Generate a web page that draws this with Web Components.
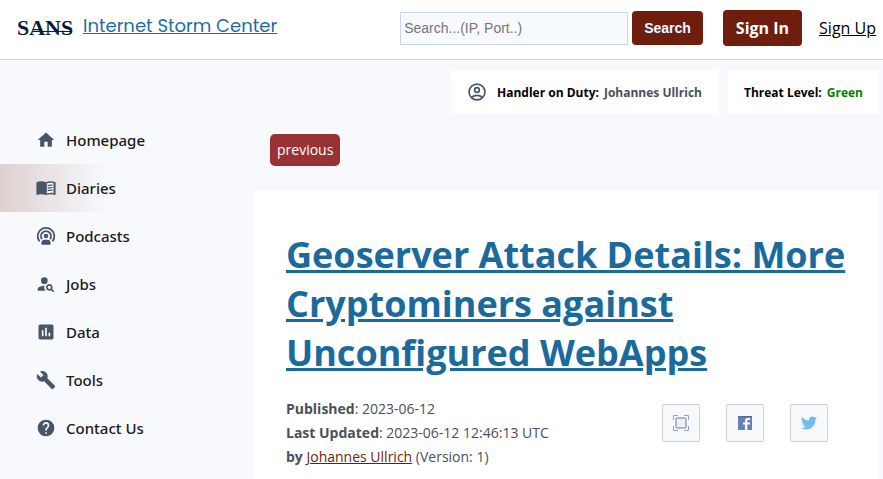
<!DOCTYPE html>
<html lang="en">
<head>
<meta charset="utf-8">
<title>Internet Storm Center</title>
<style>
  body {
    margin: 0;
    background: #f8f9fd;
    color: #000;
    font-family: "Open Sans", sans-serif;
    font-size: 14px;
  }
</style>
</head>
<body>
<isc-page>
  <isc-header slot="header"></isc-header>
  <isc-nav slot="nav">
    <isc-nav-item icon="home">Homepage</isc-nav-item>
    <isc-nav-item icon="book" active>Diaries</isc-nav-item>
    <isc-nav-item icon="podcast">Podcasts</isc-nav-item>
    <isc-nav-item icon="jobs">Jobs</isc-nav-item>
    <isc-nav-item icon="chart">Data</isc-nav-item>
    <isc-nav-item icon="wrench">Tools</isc-nav-item>
    <isc-nav-item icon="help">Contact Us</isc-nav-item>
  </isc-nav>
  <isc-status slot="status" icon="account" label="Handler on Duty:">Johannes Ullrich</isc-status>
  <isc-status slot="status" label="Threat Level:" level="green">Green</isc-status>
  <isc-diary published="2023-06-12" updated="2023-06-12 12:46:13 UTC" author="Johannes Ullrich" version="1">Geoserver Attack Details: More Cryptominers against Unconfigured WebApps</isc-diary>
</isc-page>

<script>
const ICONS = {
  home: `<path d="M10 20v-6h4v6h5v-8h3L12 3 2 12h3v8z"/>`,
  book: `<path d="M12 5C9 3.600 4 3.700 .5 5v15.500c3.500-1.500 8.500-1.500 11.500 0 3-1.500 8-1.500 11.500 0V5c-3.500-1.300-8.500-1.400-11.500 0z"/><path d="M13 6.500c2.500-1 5.500-1 8-.3v12c-2.500-.6-5.500-.5-8 .5z" fill="#f8f5f7"/><path d="M14 9.200c2-.8 4-.9 6-.5M14 12.200c2-.8 4-.9 6-.5M14 15.200c2-.8 4-.9 6-.5" fill="none" stroke="currentColor" stroke-width="1.500"/>`,
  podcast: `<g fill="none" stroke="currentColor" stroke-width="2.200"><path d="M4.200 18.500A10 10 0 1 1 19.800 18.500"/><path d="M7.200 15.800A6 6 0 1 1 16.800 15.800"/></g><circle cx="12" cy="12" r="2.800"/><path d="M6.500 22.500v-2.500c0-2 1.500-3.500 3.500-3.500h4c2 0 3.500 1.500 3.500 3.500v2.500z"/>`,
  jobs: `<circle cx="10" cy="8" r="4"/><path d="M10.350 14.010C7.620 13.910 2 15.270 2 18v2h9.540c-2.470-2.760-1.230-5.890-1.190-5.990zM19.430 18.020A4 4 0 1 0 18.020 19.430L20.590 22 22 20.590zM16 18a2 2 0 1 1 0-4 2 2 0 0 1 0 4z"/>`,
  chart: `<path d="M19 3H5a2 2 0 0 0-2 2v14a2 2 0 0 0 2 2h14a2 2 0 0 0 2-2V5a2 2 0 0 0-2-2zM9 17H7v-7h2zm4 0h-2V7h2zm4 0h-2v-4h2z"/>`,
  wrench: `<path d="M22.700 19l-9.100-9.100c.9-2.300.4-5-1.500-6.900-2-2-5-2.400-7.400-1.300L9 6 6 9 1.600 4.700C.4 7.100.9 10.100 2.900 12.100c1.900 1.900 4.600 2.400 6.900 1.500l9.100 9.100c.4.4 1 .4 1.400 0l2.300-2.300c.5-.4.5-1.100.1-1.400z"/>`,
  help: `<path d="M12 2a10 10 0 1 0 0 20 10 10 0 0 0 0-20zm1 17h-2v-2h2zm2.070-7.750l-.9.920C13.450 12.900 13 13.500 13 15h-2v-.5c0-1.100.45-2.100 1.170-2.830l1.240-1.260A2 2 0 1 0 10 9H8a4 4 0 1 1 7.070 2.250z"/>`,
  account: `<g fill="none" stroke="currentColor" stroke-width="2"><circle cx="12" cy="12" r="9.500"/><circle cx="12" cy="9.500" r="2.800"/><path d="M5.500 18.500c3.500-3.300 9.500-3.300 13 0"/></g>`
};

const icon = (name) => `<svg viewBox="0 0 24 24" width="20" height="20" fill="currentColor" aria-hidden="true">${ICONS[name]}</svg>`;

class IscPage extends HTMLElement {
  constructor() {
    super();
    this.attachShadow({ mode: "open" });
  }

  static get styles() {
    return /* css */`
      :host {
        display: block;
      }

      .layout {
        display: grid;
        grid-template-columns: 254px 1fr;
        padding: 10px 4px 0 0;
      }

      aside {
        padding-top: 46px;
      }

      .status {
        display: flex;
        justify-content: flex-end;
        gap: 10px;
      }

      .pager {
        display: flex;
        padding: 20px 16px 24px;
      }

      .pager a {
        background: #993333;
        color: #fff;
        border-radius: 5px;
        line-height: 20px;
        padding: 6px 7px;
        text-decoration: none;
      }
    `;
  }

  connectedCallback() {
    this.shadowRoot.innerHTML = /* html */`
    <style>${IscPage.styles}</style>
    <slot name="header"></slot>
    <div class="layout">
      <aside><slot name="nav"></slot></aside>
      <main>
        <div class="status"><slot name="status"></slot></div>
        <div class="pager"><a href="#previous">previous</a></div>
        <slot></slot>
      </main>
    </div>
    `;
  }
}

class IscHeader extends HTMLElement {
  constructor() {
    super();
    this.attachShadow({ mode: "open" });
  }

  static get styles() {
    return /* css */`
      :host {
        display: flex;
        align-items: center;
        justify-content: space-between;
        min-height: 56px;
        padding: 0 7px 3px 18px;
        background: #fff;
        border-bottom: 1px solid #cdd3e6;
      }

      .brand, form, .account {
        display: flex;
        align-items: center;
      }

      .brand {
        gap: 10px;
        text-decoration: none;
        color: #1e6ca0;
        font-family: Poppins, Inter, sans-serif;
        font-size: 18px;
        line-height: 24px;
      }

      .name {
        padding-bottom: 4px;
        text-decoration: underline;
      }

      .tools {
        display: flex;
        align-items: center;
        gap: 20px;
      }

      form {
        gap: 4px;
      }

      input {
        box-sizing: border-box;
        width: 228px;
        height: 33px;
        padding: 0 3px;
        background: #f8f9fd;
        border: 1px solid #c8d6ea;
        font: 14px "Liberation Sans", Arial, sans-serif;
      }

      input::placeholder {
        color: #757575;
      }

      button {
        height: 34px;
        padding: 0 12px;
        border: 0;
        border-radius: 4px;
        background: #6f1d0c;
        color: #f8f9fd;
        font: bold 14px "Liberation Sans", Arial, sans-serif;
        text-shadow: 0 1px 1px #283966;
      }

      .account {
        gap: 17px;
        font-size: 16px;
        line-height: 24px;
      }

      .account a {
        color: #000;
      }

      .account .signin {
        padding: 6px 13px;
        background: #6f1d0c;
        border-radius: 4px;
        color: #fff;
        font-weight: bold;
        text-decoration: none;
      }
    `;
  }

  connectedCallback() {
    this.shadowRoot.innerHTML = /* html */`
    <style>${IscHeader.styles}</style>
    <a class="brand" href="#home">
      <svg width="55" height="28" viewBox="0 0 55 28" fill="#071a33" role="img">
        <text x="-1" y="21" font-family="Liberation Serif, serif" font-weight="bold" font-size="22">SANS</text>
        <path d="M15 17h38v1H15z"/>
      </svg>
      <span class="name">Internet Storm Center</span>
    </a>
    <div class="tools">
      <form>
        <input type="text" aria-label="Search" placeholder="Search...(IP, Port..)">
        <button type="button">Search</button>
      </form>
      <div class="account">
        <a class="signin" href="#login">Sign In</a>
        <a href="#register">Sign Up</a>
      </div>
    </div>
    `;
  }
}

class IscNav extends HTMLElement {
  constructor() {
    super();
    this.attachShadow({ mode: "open" });
  }

  connectedCallback() {
    this.shadowRoot.innerHTML = /* html */`
    <style>
      :host {
        display: block;
      }

      nav {
        display: flex;
        flex-direction: column;
      }
    </style>
    <nav><slot></slot></nav>
    `;
  }
}

class IscNavItem extends HTMLElement {
  constructor() {
    super();
    this.attachShadow({ mode: "open" });
  }

  static get styles() {
    return /* css */`
      :host {
        display: block;
      }

      :host([active]) {
        background: linear-gradient(90deg, #dfd0d0, #f8f9fd 108px);
      }

      a {
        display: flex;
        align-items: center;
        gap: 10px;
        height: 48px;
        padding-left: 36px;
        color: #1a1a1a;
        font-family: "Noto Sans", sans-serif;
        font-size: 15px;
        font-weight: 500;
        text-decoration: none;
      }

      svg {
        color: #475569;
      }
    `;
  }

  connectedCallback() {
    this.shadowRoot.innerHTML = /* html */`
    <style>${IscNavItem.styles}</style>
    <a href="#${this.getAttribute("icon")}">${icon(this.getAttribute("icon"))}<span><slot></slot></span></a>
    `;
  }
}

class IscStatus extends HTMLElement {
  constructor() {
    super();
    this.attachShadow({ mode: "open" });
  }

  static get styles() {
    return /* css */`
      :host {
        display: flex;
        align-items: center;
        min-height: 44px;
        padding: 0 16px;
        background: #fff;
        color: #4a5057;
        font-size: 12px;
        font-weight: bold;
      }

      :host([level="green"]) {
        color: #008000;
      }

      svg {
        color: #475569;
        margin-right: 10px;
      }

      .label {
        color: #000;
        margin-right: 5px;
      }
    `;
  }

  connectedCallback() {
    const name = this.getAttribute("icon");
    this.shadowRoot.innerHTML = /* html */`
    <style>${IscStatus.styles}</style>
    ${name ? icon(name) : ""}
    <span class="label">${this.getAttribute("label")}</span>
    <span><slot></slot></span>
    `;
  }
}

class IscDiary extends HTMLElement {
  constructor() {
    super();
    this.attachShadow({ mode: "open" });
  }

  static get styles() {
    return /* css */`
      :host {
        display: block;
        min-height: 225px;
        padding: 40px 32px 24px;
        background: #fff;
        color: #4a5057;
      }

      h1 {
        margin: 0;
        font-size: 36px;
        line-height: 49px;
      }

      h1 a {
        color: #1b6a9c;
      }

      .info {
        display: flex;
        justify-content: space-between;
        align-items: flex-start;
        padding: 20px 19px 0 0;
      }

      .meta {
        line-height: 24px;
      }

      .meta a {
        color: #6f1d0c;
      }

      .share {
        display: flex;
        gap: 26px;
        padding-top: 7px;
      }

      .share a {
        display: flex;
        align-items: center;
        justify-content: center;
        width: 36px;
        height: 36px;
        background: #f8f9fd;
        border: 1px solid #ced0d4;
        border-radius: 2px;
      }
    `;
  }

  connectedCallback() {
    this.shadowRoot.innerHTML = /* html */`
    <style>${IscDiary.styles}</style>
    <h1><a href="#diary"><slot></slot></a></h1>
    <div class="info">
      <div class="meta">
        <div><b>Published</b>: ${this.getAttribute("published")}</div>
        <div><b>Last Updated</b>: ${this.getAttribute("updated")}</div>
        <div><b>by</b> <a href="#handler">${this.getAttribute("author")}</a> (Version: ${this.getAttribute("version")})</div>
      </div>
      <div class="share">
        <a href="#full" aria-label="Full screen">
          <svg width="16" height="16" viewBox="0 0 16 16" fill="none" stroke="#8ba5d3">
            <path d="M.5 5V.5H5M11 .5h4.500V5M15.500 11v4.500H11M5 15.500H.5V11"/>
            <rect x="3" y="3" width="10" height="10" rx="1.500" fill="#edeff2" stroke="#90a4cd" stroke-width="1.500"/>
          </svg>
        </a>
        <a href="#facebook" aria-label="Facebook">
          <svg width="14" height="14" viewBox="0 0 14 14">
            <path fill="#6a80b5" d="M0 0h14v14H0z"/>
            <path fill="#52689f" d="M0 0h14v1H0z"/>
            <path fill="#fff" d="M7 14V8.500H5v-2h2V5c0-2 1-3 3-3h2v2h-1.500C9.700 4 9.300 4.300 9.300 5v1.500H12l-.3 2H9.300V14z"/>
          </svg>
        </a>
        <a href="#twitter" aria-label="Twitter">
          <svg width="16" height="16" viewBox="0 0 24 24" fill="#74bcf0">
            <path d="M23.950 4.600a10 10 0 0 1-2.800.8 4.900 4.900 0 0 0 2.150-2.700 9.900 9.900 0 0 1-3.120 1.200 4.920 4.920 0 0 0-8.380 4.480A13.950 13.950 0 0 1 1.670 3.150a4.900 4.900 0 0 0 1.520 6.560 4.900 4.900 0 0 1-2.230-.61v.06a4.930 4.930 0 0 0 3.950 4.830 5 5 0 0 1-2.210.08 4.940 4.940 0 0 0 4.600 3.420A9.870 9.870 0 0 1 0 19.540a14 14 0 0 0 7.550 2.210c9.050 0 14-7.500 14-13.980l-.02-.63a9.900 9.900 0 0 0 2.420-2.540z"/>
          </svg>
        </a>
      </div>
    </div>
    `;
  }
}

customElements.define("isc-page", IscPage);
customElements.define("isc-header", IscHeader);
customElements.define("isc-nav", IscNav);
customElements.define("isc-nav-item", IscNavItem);
customElements.define("isc-status", IscStatus);
customElements.define("isc-diary", IscDiary);
</script>
</body>
</html>
